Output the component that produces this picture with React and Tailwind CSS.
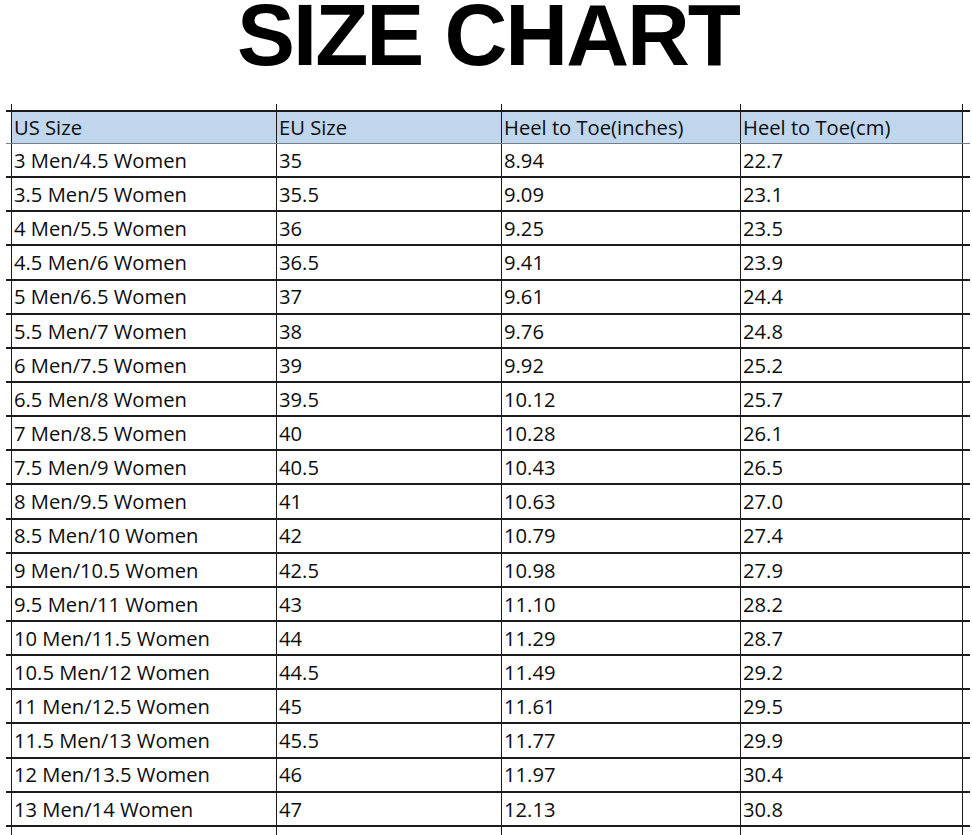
import React from 'react';

const rows = [
  ['3 Men/4.5 Women', '35', '8.94', '22.7'],
  ['3.5 Men/5 Women', '35.5', '9.09', '23.1'],
  ['4 Men/5.5 Women', '36', '9.25', '23.5'],
  ['4.5 Men/6 Women', '36.5', '9.41', '23.9'],
  ['5 Men/6.5 Women', '37', '9.61', '24.4'],
  ['5.5 Men/7 Women', '38', '9.76', '24.8'],
  ['6 Men/7.5 Women', '39', '9.92', '25.2'],
  ['6.5 Men/8 Women', '39.5', '10.12', '25.7'],
  ['7 Men/8.5 Women', '40', '10.28', '26.1'],
  ['7.5 Men/9 Women', '40.5', '10.43', '26.5'],
  ['8 Men/9.5 Women', '41', '10.63', '27.0'],
  ['8.5 Men/10 Women', '42', '10.79', '27.4'],
  ['9 Men/10.5 Women', '42.5', '10.98', '27.9'],
  ['9.5 Men/11 Women', '43', '11.10', '28.2'],
  ['10 Men/11.5 Women', '44', '11.29', '28.7'],
  ['10.5 Men/12 Women', '44.5', '11.49', '29.2'],
  ['11 Men/12.5 Women', '45', '11.61', '29.5'],
  ['11.5 Men/13 Women', '45.5', '11.77', '29.9'],
  ['12 Men/13.5 Women', '46', '11.97', '30.4'],
  ['13 Men/14 Women', '47', '12.13', '30.8'],
];

const header = ['US Size', 'EU Size', 'Heel to Toe(inches)', 'Heel to Toe(cm)'];

const gridCols = 'grid grid-cols-[5px_265px_225px_239px_222px_8px]';

function Row({ cells, head, className }) {
  return (
    <div className={`${gridCols} ${className}`}>
      <div />
      {cells.map((c, i) => (
        <div
          key={i}
          className={`flex items-center border-l-[1.5px] border-[#1a1a1a] pl-[2px] ${head ? 'bg-[#bfd6ed]' : ''}`}
        >
          {c}
        </div>
      ))}
      <div className="border-l-[1.5px] border-[#1a1a1a]" />
    </div>
  );
}

export default function App() {
  return (
    <div className="w-[972px] h-[835px] overflow-hidden bg-white text-[#0d0d0d]">
      <h1 className="text-center text-[87px] font-bold tracking-[-2px] leading-[70px] font-[Liberation_Sans,Arial,sans-serif] text-black pl-[4px]">
        SIZE CHART
      </h1>
      <div className="mt-[34px] w-[964px] ml-[6px] font-['Open_Sans',sans-serif] text-[20.2px]">
        <Row cells={['', '', '', '']} className="h-[6px]" />
        <Row
          cells={header}
          head
          className="h-[34px] border-t-2 border-b border-t-[#1a1a1a] border-b-[#6f7f8f]"
        />
        {rows.map((r, i) => (
          <Row key={i} cells={r} className="h-[34.15px] border-b-2 border-[#1c1c1c]" />
        ))}
        <Row cells={['', '', '', '']} className="h-[10px]" />
      </div>
    </div>
  );
}
